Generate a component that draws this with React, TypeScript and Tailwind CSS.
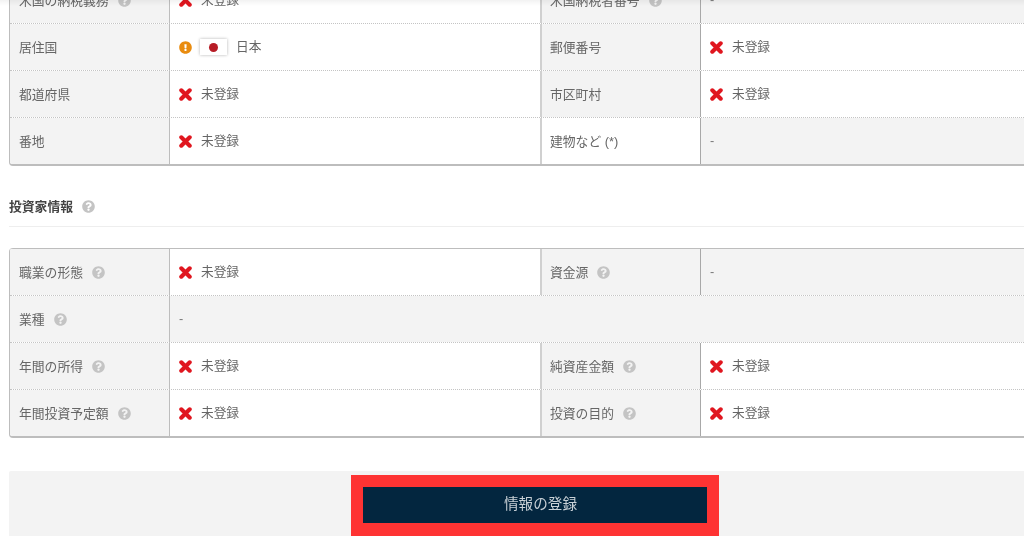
import React from 'react';
import { FaExclamationCircle, FaQuestionCircle } from 'react-icons/fa';

type Cell = { label: string; help?: boolean; value: 'none' | 'dash' | 'country'; labelBg?: boolean; valueBg?: boolean };

const residence: Cell[][] = [
  [
    { label: '米国の納税義務', help: true, value: 'none', labelBg: true },
    { label: '米国納税者番号', help: true, value: 'dash', labelBg: true, valueBg: true },
  ],
  [
    { label: '居住国', value: 'country', labelBg: true },
    { label: '郵便番号', value: 'none', labelBg: true },
  ],
  [
    { label: '都道府県', value: 'none', labelBg: true },
    { label: '市区町村', value: 'none', labelBg: true },
  ],
  [
    { label: '番地', value: 'none', labelBg: true },
    { label: '建物など (*)', value: 'dash', valueBg: true },
  ],
];

const investor: Cell[][] = [
  [
    { label: '職業の形態', help: true, value: 'none', labelBg: true },
    { label: '資金源', help: true, value: 'dash', labelBg: true, valueBg: true },
  ],
  [{ label: '業種', help: true, value: 'dash', labelBg: true, valueBg: true }],
  [
    { label: '年間の所得', help: true, value: 'none', labelBg: true },
    { label: '純資産金額', help: true, value: 'none', labelBg: true },
  ],
  [
    { label: '年間投資予定額', help: true, value: 'none', labelBg: true },
    { label: '投資の目的', help: true, value: 'none', labelBg: true },
  ],
];

function HelpIcon() {
  return <FaQuestionCircle className="ml-[9px] h-[13px] w-[13px] shrink-0 text-[#c4c4c4]" />;
}

function CrossIcon() {
  return (
    <svg width="13" height="13" viewBox="0 0 13 13" className="shrink-0">
      <path d="M2.3 2.3 10.7 10.7M10.7 2.3 2.3 10.7" stroke="#e0161f" strokeWidth="4.1" strokeLinecap="round" />
    </svg>
  );
}

function Value({ kind }: { kind: Cell['value'] }) {
  if (kind === 'dash') return <span className="pt-[2px] text-[#777]">-</span>;
  if (kind === 'country') {
    return (
      <>
        <FaExclamationCircle className="h-[13px] w-[13px] shrink-0 text-[#e98c10]" />
        <span className="ml-[8px] flex h-[16px] w-[27px] items-center justify-center bg-white shadow-[0_0_3px_rgba(0,0,0,0.3)]">
          <span className="h-[9px] w-[9px] rounded-full bg-[#b71c26]" />
        </span>
        <span className="ml-[9px] pt-[2px]">日本</span>
      </>
    );
  }
  return (
    <>
      <CrossIcon />
      <span className="ml-[9px] pt-[2px]">未登録</span>
    </>
  );
}

function InfoTable({ rows, className }: { rows: Cell[][]; className?: string }) {
  return (
    <div className={`mr-[-20px] overflow-hidden border-b-2 border-l border-[#bdbdbd] ${className ?? ''}`}>
      {rows.map((row, i) => (
        <div
          key={row[0].label}
          className={`grid h-[47px] grid-cols-[160px_372px_159px_1fr] border-t ${i > 0 ? 'border-dotted border-[#c4c4c4]' : 'border-[#bdbdbd]'}`}
        >
          {row.map((cell, j) => (
            <React.Fragment key={cell.label}>
              <div
                className={`flex items-center border-r ${j === 0 ? 'border-[#bdbdbd] pl-[9px]' : 'border-[#a8a8a8] pl-[8px]'} ${cell.labelBg ? 'bg-[#f3f3f3]' : 'bg-white'}`}
              >
                <span className="pt-[2px]">{cell.label}</span>
                {cell.help && <HelpIcon />}
              </div>
              <div
                className={`flex items-center pl-[9px] text-[12.7px] ${row.length === 1 ? 'col-span-3' : j === 0 ? 'border-r-2 border-[#d0d0d0]' : ''} ${cell.valueBg ? 'bg-[#f3f3f3]' : 'bg-white'}`}
              >
                <Value kind={cell.value} />
              </div>
            </React.Fragment>
          ))}
        </div>
      ))}
    </div>
  );
}

export default function App() {
  return (
    <div className="relative h-[536px] w-[1024px] overflow-hidden bg-white pl-[9px] font-['Liberation_Sans','Noto_Sans_CJK_JP',sans-serif] text-[12.8px] text-[#666] blur-[0.4px]">
      <InfoTable rows={residence} className="mt-[-24px] rounded-bl-[4px]" />

      <div className="mt-[30px] flex h-[31px] items-start border-b border-[#eeeeee]">
        <h2 className="flex items-center leading-[18px] font-bold text-[#444]">
          <span className="pt-[2px]">投資家情報</span>
          <HelpIcon />
        </h2>
      </div>

      <InfoTable rows={investor} className="mt-[21px] rounded-l-[4px]" />

      <div className="mt-[33px] mr-[-37px] flex h-[65px] justify-center rounded-tl-[2px] bg-[#f3f3f3] pt-[4px]">
        <div className="h-[61px] w-[368px] bg-[#fe3333] p-[12px]">
          <button className="h-[36px] w-full bg-[#03263f] pl-[11px] text-[14.6px] text-[#c8d0d6]">情報の登録</button>
        </div>
      </div>

      {/* shadow from the sticky header above the crop */}
      <div className="absolute inset-x-0 top-0 h-[6px] bg-gradient-to-b from-black/5 to-transparent" />
    </div>
  );
}
